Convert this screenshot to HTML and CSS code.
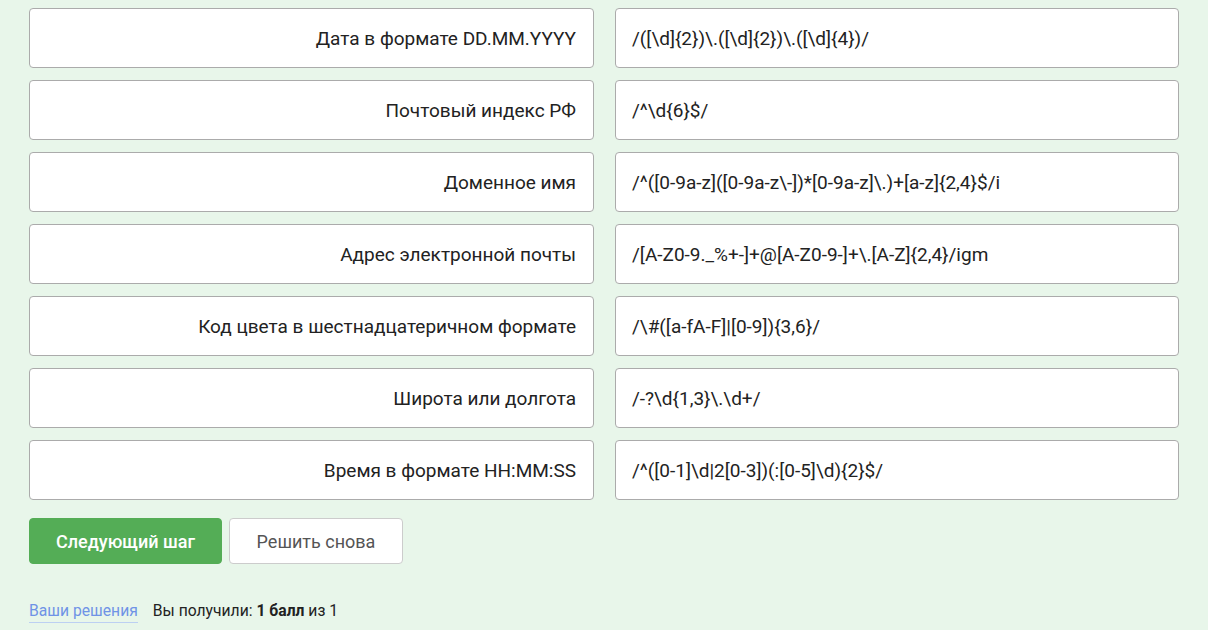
FILE: index.html
```html
<!DOCTYPE html>
<html lang="ru">
<head>
<meta charset="utf-8">
<link rel="stylesheet" href="styles.css">
</head>
<body>
<div class="page">
  <div class="matching">
    <div class="cell cell-left">Дата в формате DD.MM.YYYY</div>
    <div class="cell cell-right">/([\d]{2})\.([\d]{2})\.([\d]{4})/</div>
    <div class="cell cell-left">Почтовый индекс РФ</div>
    <div class="cell cell-right">/^\d{6}$/</div>
    <div class="cell cell-left">Доменное имя</div>
    <div class="cell cell-right">/^([0-9a-z]([0-9a-z\-])*[0-9a-z]\.)+[a-z]{2,4}$/i</div>
    <div class="cell cell-left">Адрес электронной почты</div>
    <div class="cell cell-right">/[A-Z0-9._%+-]+@[A-Z0-9-]+\.[A-Z]{2,4}/igm</div>
    <div class="cell cell-left">Код цвета в шестнадцатеричном формате</div>
    <div class="cell cell-right">/\#([a-fA-F]|[0-9]){3,6}/</div>
    <div class="cell cell-left">Широта или долгота</div>
    <div class="cell cell-right">/-?\d{1,3}\.\d+/</div>
    <div class="cell cell-left">Время в формате HH:MM:SS</div>
    <div class="cell cell-right">/^([0-1]\d|2[0-3])(:[0-5]\d){2}$/</div>
  </div>
  <div class="actions">
    <button class="btn btn-primary">Следующий шаг</button>
    <button class="btn btn-secondary">Решить снова</button>
  </div>
  <div class="footer">
    <a class="link" href="#">Ваши решения</a>
    <span class="score">Вы получили: <b>1 балл</b> из 1</span>
  </div>
</div>
</body>
</html>
```
FILE: styles.css
```css
html, body {
  margin: 0;
  padding: 0;
  background: #e8f6ea;
}
body {
  font-family: Roboto, "Liberation Sans", sans-serif;
  color: #222;
}
.page {
  padding: 8px 28px 0 29px;
}
.matching {
  display: grid;
  grid-template-columns: 565px 564px;
  column-gap: 21px;
  row-gap: 12px;
}
.cell {
  box-sizing: border-box;
  height: 60px;
  background: #fff;
  border: 1px solid #ababab;
  border-radius: 4px;
  display: flex;
  align-items: center;
  font-size: 19px;
  color: #222;
}
.cell-left {
  justify-content: flex-end;
  padding: 0 17px 0 16px;
}
.cell-right {
  padding: 0 16px;
}
.actions {
  display: flex;
  gap: 7px;
  margin-top: 18px;
}
.btn {
  box-sizing: border-box;
  height: 46px;
  font-family: Roboto, "Liberation Sans", sans-serif;
  font-size: 18px;
  border-radius: 4px;
  cursor: pointer;
}
.btn-primary {
  width: 193px;
  background: #54ad56;
  border: 1px solid #54ad56;
  color: #fff;
  font-weight: 500;
}
.btn-secondary {
  width: 174px;
  background: #fff;
  border: 1px solid #cccccc;
  color: #555;
}
.footer {
  display: flex;
  align-items: baseline;
  gap: 15px;
  margin-top: 37px;
  font-size: 15.7px;
}
.link {
  color: #6f93e6;
  text-decoration: none;
  border-bottom: 1px solid #bcd0f2;
  padding-bottom: 2px;
}
.score {
  color: #222;
}
.score b {
  font-weight: 700;
}
```
